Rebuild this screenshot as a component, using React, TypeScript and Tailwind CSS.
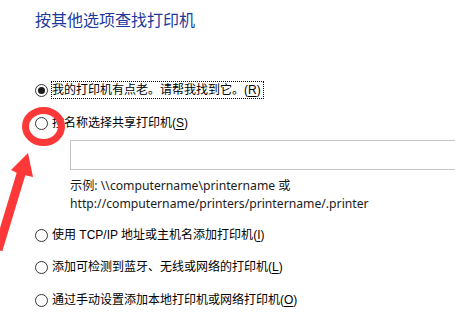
import React from "react";

const FONT = '"Liberation Sans", "Noto Sans CJK SC", sans-serif';
const FONT2 = '"Noto Sans", "Noto Sans CJK SC", sans-serif';

function Radio({ checked }: { checked?: boolean }) {
  return (
    <span className="flex h-[13px] w-[13px] shrink-0 items-center justify-center rounded-full border border-[#333333] bg-white">
      {checked && <span className="h-[7px] w-[7px] rounded-full bg-[#1a1a1a]" />}
    </span>
  );
}

function Option({ label, k, checked, focused }: { label: string; k: string; checked?: boolean; focused?: boolean }) {
  return (
    <div className="flex h-[18px] items-center gap-[3px]">
      <Radio checked={checked} />
      <span
        className={
          "flex h-[18px] items-center pr-[2px] text-[12px] leading-[18px] text-black " +
          (focused ? "border border-dotted border-black" : "border border-transparent")
        }
      >
        {label}(<span className="underline underline-offset-2">{k}</span>)
      </span>
    </div>
  );
}

export default function App() {
  return (
    <div className="relative h-[312px] w-[455px] overflow-hidden bg-white" style={{ fontFamily: FONT }}>
      <div className="flex flex-col pl-[35px] pt-[11px]">
        <div className="h-[20px] text-[16px] leading-[20px] text-[#1b3a9e]">按其他选项查找打印机</div>
        <div className="mt-[50px]">
          <Option label="我的打印机有点老。请帮我找到它。" k="R" checked focused />
        </div>
        <div className="mt-[15px]">
          <Option label="按名称选择共享打印机" k="S" />
        </div>
        <div className="ml-[35px] mt-[8px] h-[30px] w-[400px] border border-[#c4c4c4] bg-white" />
        <div
          className="ml-[35px] mt-[7px] text-[12.2px] leading-[18px] text-[#1a1a1a]"
          style={{ fontFamily: FONT2 }}
        >
          <div>示例: \\computername\printername 或</div>
          <div>http://computername/printers/printername/.printer</div>
        </div>
        <div className="mt-[13px]">
          <Option label="使用 TCP/IP 地址或主机名添加打印机" k="I" />
        </div>
        <div className="mt-[14px]">
          <Option label="添加可检测到蓝牙、无线或网络的打印机" k="L" />
        </div>
        <div className="mt-[15px]">
          <Option label="通过手动设置添加本地打印机或网络打印机" k="O" />
        </div>
      </div>
      <svg className="pointer-events-none absolute left-0 top-0" width="455" height="312" viewBox="0 0 455 312">
        <ellipse cx="43.5" cy="126.5" rx="18" ry="16" fill="none" stroke="#fd3838" strokeWidth="7" />
        <polygon
          points="28,153 33,177 25.3,175.3 2.3,251.3 -6.3,248.7 16.7,172.7 11,170"
          fill="#fd3838"
        />
      </svg>
    </div>
  );
}
